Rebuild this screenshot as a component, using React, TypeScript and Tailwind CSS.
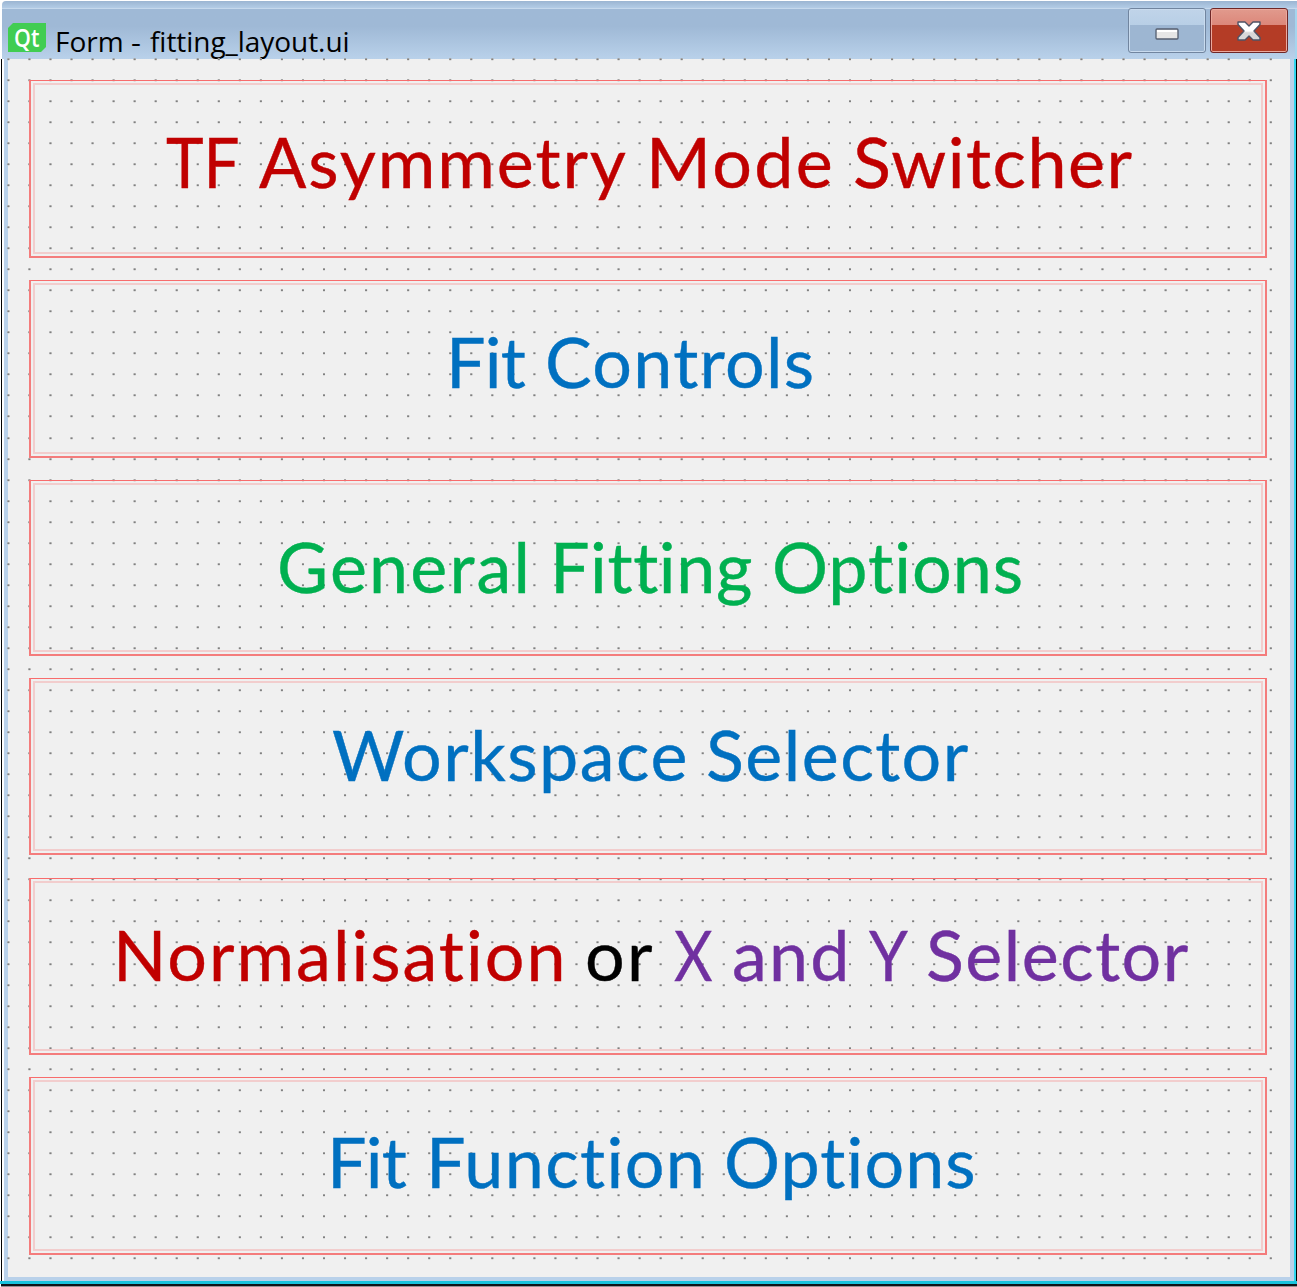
import React from 'react';

const dots: string[] = [];
for (let r = 0; r < 58; r++) {
  const y = 59 + Math.round(r * 21.04 - 0.2) + 0.3;
  dots.push(`M7.4 ${y}H1273`);
}

function DotGrid() {
  return (
    <svg className="pointer-events-none absolute -left-2 -top-[59px]" width="1289" height="1277">
      <path d={dots.join('')} fill="none" stroke="#c6c6c6" strokeWidth="2.6" strokeDasharray="2 19.04" />
      <path d={dots.join('')} fill="none" stroke="#808080" strokeWidth="1.4" strokeDasharray="2 19.04" />
    </svg>
  );
}

function Panel({ className, children }: { className: string; children: React.ReactNode }) {
  return (
    <section className={`relative box-border w-[1238px] shrink-0 border-2 border-t border-[#f47c7c] border-t-[#f86c6c] p-[2px] ${className}`}>
      <div className="h-full border-2 border-[#f2cdcd]">
        <h2 className="flex whitespace-nowrap [-webkit-text-stroke:0.4px_currentColor]">{children}</h2>
      </div>
    </section>
  );
}

function Word({ className, children }: { className: string; children: string }) {
  return <span className={`block shrink-0 origin-left ${className}`}>{children}</span>;
}

function QtLogo() {
  return (
    <span className="mt-[23px] flex h-[29px] w-[38px] justify-center bg-[#41cd52] font-['Open_Sans',sans-serif] text-[25px] font-semibold leading-[28px] text-white [clip-path:polygon(5px_0,100%_0,100%_24px,33px_100%,0_100%,0_5px)]">
      <span className="scale-x-[0.86]">Qt</span>
    </span>
  );
}

export default function App() {
  return (
    <div className="flex h-[1287px] w-[1297px] flex-col overflow-hidden bg-white font-['Lato',sans-serif] text-[70px] leading-[84px] [font-variant-ligatures:none]">
      <header className="flex h-[59px] shrink-0 flex-col pl-[2px]">
        <div className="mt-px h-[8px] shrink-0 rounded-tl-sm border-b border-[#c5d8ec] bg-linear-to-b from-[#9bb5d2] to-[#b3cce6]" />
        <div className="flex h-[50px] items-start border-r-2 border-[#a5d5ee] bg-linear-to-b from-[#9fb9d6] from-35% to-[#b9d1ea] pl-[6px]">
          <div className="-mt-[9px] flex">
            <QtLogo />
            <span className="ml-[9px] mt-[23px] flex whitespace-nowrap font-['Open_Sans',sans-serif] text-[28px] leading-9 text-black">
              <span className="w-[76px]">Form</span>
              <span className="w-[19px] origin-left scale-x-[1.1]">-</span>
              <span className="tracking-[-0.05px]">fitting_layout.ui</span>
            </span>
          </div>
          <div className="-mt-px ml-auto mr-[7px] flex gap-1">
            <button className="flex h-[45px] w-[78px] items-center justify-center rounded-[3px] border border-[#71859f] bg-linear-to-b from-[#c0d4e9] from-0% via-[#b8cfe6] via-37% to-[#9db6d2] to-38% p-0 shadow-[inset_0_0_0_1px_#c9dbee]">
              <svg width="24" height="12" className="mt-[7px]">
                <rect x="1" y="1" width="22" height="10" rx="1" fill="#e6e6e6" stroke="#555f70" strokeWidth="1.3" />
                <path d="M2 3H22" stroke="#fff" strokeWidth="2" />
              </svg>
            </button>
            <button className="flex h-[45px] w-[78px] items-center justify-center rounded-[3px] border border-[#6f2727] bg-linear-to-b from-[#e19a8d] from-0% via-[#dc877a] via-37% to-[#b43c26] to-38% p-0 shadow-[inset_0_0_0_1px_#eba99e]">
              <svg width="24" height="20" viewBox="0 0 24 20">
                <defs>
                  <linearGradient id="cross" x1="0" y1="0" x2="0" y2="1">
                    <stop offset="0.5" stopColor="#fff" />
                    <stop offset="0.6" stopColor="#d8d8d8" />
                  </linearGradient>
                </defs>
                <path d="M1 1H8L12 5L16 1H23V3.500L17 10L23 16.500V19H16L12 15L8 19H1V16.500L7 10L1 3.500Z" fill="url(#cross)" stroke="#4f5365" strokeWidth="1.4" strokeLinejoin="round" />
              </svg>
            </button>
          </div>
        </div>
      </header>
      <div className="flex h-[1225px] shrink-0 border-b-3 border-[#19c3dd]">
        <div className="h-full w-[3px] shrink-0 border-l border-white bg-black bg-clip-padding"><div className="ml-px h-full bg-white" /></div>
        <div className="ml-px h-full w-[1290px] border-x-4 border-b-4 border-[#b9d1ea]">
          <main className="relative flex h-[1218px] flex-col bg-[#f0f0f0] pl-[21px] pt-[21px]">
            <DotGrid />
            <Panel className="h-[178px] text-[#c00000] [&_h2]:pl-[131px] [&_h2]:pt-[34px]">
              <Word className="w-[93px] scale-x-[0.91]">TF</Word>
              <Word className="w-[387px] tracking-[1.9px]">Asymmetry</Word>
              <Word className="w-[207px] tracking-[2.3px]">Mode</Word>
              <Word className="tracking-[1.5px]">Switcher</Word>
            </Panel>
            <Panel className="mt-[22px] h-[178px] text-[#0070c0] [&_h2]:pl-[411px] [&_h2]:pt-[34px]">
              <Word className="w-[99px] tracking-[-0.7px]">Fit</Word>
              <Word className="tracking-[1.3px]">Controls</Word>
            </Panel>
            <Panel className="mt-[22px] h-[176px] text-[#00b050] [&_h2]:pl-[242px] [&_h2]:pt-[39px]">
              <Word className="w-[273px] tracking-[2.2px]">General</Word>
              <Word className="w-[222px] tracking-[0.6px]">Fitting</Word>
              <Word className="tracking-[1px]">Options</Word>
            </Panel>
            <Panel className="mt-[22px] h-[177px] text-[#0070c0] [&_h2]:pl-[297px] [&_h2]:pt-[29px]">
              <Word className="w-[374px] tracking-[1.5px]">Workspace</Word>
              <Word className="tracking-[1.5px]">Selector</Word>
            </Panel>
            <Panel className="mt-[23px] h-[177px] text-[#c00000] [&_h2]:pl-[78px] [&_h2]:pt-[29px]">
              <Word className="w-[472px] tracking-[2px]">Normalisation</Word>
              <Word className="w-[89px] tracking-[2.2px] text-black">or</Word>
              <Word className="w-[58px] scale-x-[0.85] text-[#7030a0]">X</Word>
              <Word className="w-[137px] tracking-[2.2px] text-[#7030a0]">and</Word>
              <Word className="w-[57px] scale-x-[0.89] text-[#7030a0]">Y</Word>
              <Word className="tracking-[1.5px] text-[#7030a0]">Selector</Word>
            </Panel>
            <Panel className="mt-[22px] h-[178px] text-[#0070c0] [&_h2]:pl-[292px] [&_h2]:pt-[37px]">
              <Word className="w-[99px] tracking-[-0.7px]">Fit</Word>
              <Word className="w-[298px] tracking-[1.4px]">Function</Word>
              <Word className="tracking-[1.1px]">Options</Word>
            </Panel>
          </main>
        </div>
        <div className="h-full w-[2px] bg-[#2fd5ee]" />
        <div className="h-full w-px bg-black" />
      </div>
      <div className="ml-px h-[3px] border-b border-[#9a8f93] bg-[#101418]" />
    </div>
  );
}
